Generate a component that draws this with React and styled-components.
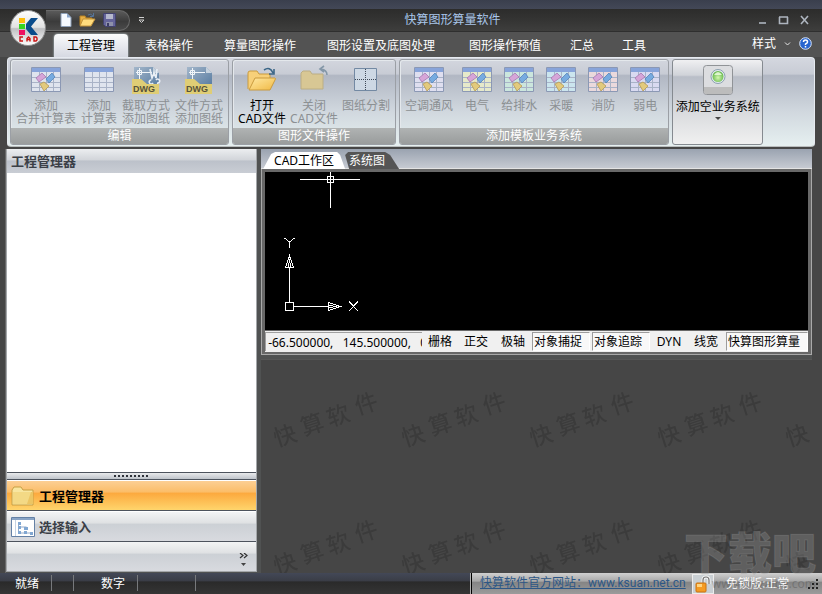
import React from 'react';
import styled, { createGlobalStyle, css } from 'styled-components';

const GlobalStyle = createGlobalStyle`
  * { box-sizing: border-box; }
  body {
    margin: 0;
    background: #464646;
    font: 12px/16px "Noto Sans", "Noto Sans CJK SC", sans-serif;
    color: #000;
  }
  button {
    margin: 0;
    padding: 0;
    border: 0;
    background: none;
    font: inherit;
    color: inherit;
    white-space: nowrap;
    cursor: default;
  }
  svg { display: block; flex: none; }
`;

const Window = styled.div`
  position: relative;
  display: flex;
  flex-direction: column;
  height: 100vh;
  overflow: hidden;
  background: #464646;
`;

/* Title bar */

const TopEdge = styled.div`
  height: 9px;
  flex: none;
  background: linear-gradient(#3a3f4d, #434857);
`;

const TitleBar = styled.header`
  display: grid;
  grid-template-columns: auto 1fr auto;
  align-items: center;
  height: 23px;
  flex: none;
  padding: 0 10px 0 46px;
  background: linear-gradient(#2c2c2b, #363635 60%, #3e3e3d);
  border-bottom: 1px solid #2f2f2f;
`;

const QuickAccess = styled.div`
  display: flex;
  align-items: center;
  gap: 8px;
`;

const QuickTools = styled.div`
  display: flex;
  align-items: center;
  gap: 6px;
  height: 21px;
  padding: 0 12px 0 13px;
  border: 1px solid #6a6a6a;
  border-left: 0;
  border-radius: 0 11px 11px 0;
  background: linear-gradient(#5a5a5a, #3b3b3b 55%, #4b4b4b);
`;

const Title = styled.h1`
  margin: 0;
  padding-left: 4px;
  font-size: 12px;
  line-height: 20px;
  font-weight: 400;
  text-align: center;
  color: #a9c6ea;
`;

const WindowButtons = styled.div`
  display: flex;
  justify-content: flex-end;
  gap: 7px;
`;

const LogoButton = styled.button`
  position: absolute;
  left: 10px;
  top: 10px;
  z-index: 2;
`;

/* Ribbon */

const TabRow = styled.div`
  display: flex;
  align-items: stretch;
  justify-content: space-between;
  height: 25px;
  flex: none;
  padding: 2px 10px 0 54px;
  background: #535353;
`;

const TabList = styled.div`
  display: flex;
  gap: 2px;
`;

const RibbonTab = styled.button`
  width: ${(p) => p.$width}px;
  padding-top: 1px;
  line-height: 20px;
  color: #fff;
  ${(p) => p.$active && css`
    color: #000;
    border-radius: 4px 4px 0 0;
    background: linear-gradient(#fafbfc, #d6d9e2);
    box-shadow: 0 0 2px #cfe4ea;
  `}
`;

const TabExtras = styled.div`
  display: flex;
  align-items: center;
  gap: 8px;
  color: #fff;
  padding-bottom: 4px;
`;

const Ribbon = styled.div`
  display: flex;
  gap: 3px;
  height: 90px;
  flex: none;
  margin: 0 7px;
  padding: 1px 2px;
  border-radius: 4px;
  border: 1px solid #e6eaf0;
  border-bottom-color: #b9bdbd;
  background: linear-gradient(#d4d7df, #c8ccd5 18%, #b1b7c3 20%, #d0d7de 60%, #e6f0f0);
`;

const Group = styled.section`
  display: flex;
  flex-direction: column;
  height: 86px;
  border: 1px solid #9b9fa5;
  border-radius: 3px;
  overflow: hidden;
  box-shadow: inset 1px 1px 0 #e4e8ec;
`;

const GroupItems = styled.div`
  display: flex;
  flex: 1;
  align-items: flex-start;
  gap: ${(p) => p.$gap}px;
  padding: 4px 5px 0;
`;

const GroupLabel = styled.div`
  height: 16px;
  line-height: 15px;
  text-align: center;
  color: #fff;
  background: linear-gradient(#b0b3b3, #999c9c);
`;

const Tool = styled.button`
  display: flex;
  flex-direction: column;
  align-items: center;
  min-width: 36px;
  line-height: 13px;
  color: ${(p) => (p.$enabled ? '#000' : '#8c9093')};
  svg { margin-bottom: 3px; }
`;

const FeatureTool = styled.button`
  display: flex;
  flex-direction: column;
  align-items: center;
  gap: 4px;
  width: 91px;
  height: 86px;
  padding-top: 4px;
  line-height: 13px;
  border: 1px solid #858a90;
  border-radius: 3px;
  background: linear-gradient(#f0f0f2, #d0d3d9 18%, #b9bec8 20%, #d8dadd 60%, #f0f0f0);
`;

/* Body */

const Body = styled.main`
  display: grid;
  grid-template-columns: minmax(0, 31fr) minmax(0, 68fr);
  gap: 4px;
  flex: 1;
  min-height: 0;
  margin: 2px 10px 0 5px;
  border-left: 1px solid #686868;
  background: #505252;
`;

const SidePanel = styled.aside`
  display: flex;
  flex-direction: column;
  min-width: 0;
  margin-bottom: 1px;
  border: 1px solid #a4a7aa;
  border-top: 0;
  background: #fff;
`;

const PanelHeader = styled.h2`
  margin: 0;
  padding: 0 4px;
  height: 24px;
  font-size: 13px;
  line-height: 25px;
  color: #3b3f47;
  background: linear-gradient(#eceef0, #d2d5da 45%, #bcc1ca 50%, #c9cdd4);
`;

const TreeArea = styled.div`
  flex: 1;
`;

const Splitter = styled.div`
  display: flex;
  justify-content: center;
  align-items: center;
  height: 8px;
  border-top: 1px solid #4d535d;
  border-bottom: 1px solid #4d535d;
  background: linear-gradient(#e9eaec, #bfc4cb);
`;

const NavButton = styled.button`
  display: flex;
  align-items: center;
  gap: 4px;
  height: 31px;
  padding: 0 4px;
  border-top: 1px solid #fff;
  border-bottom: 1px solid #4d535d;
  font-size: 13px;
  font-weight: 700;
  color: ${(p) => (p.$active ? '#000' : '#3b3f47')};
  background: ${(p) => (p.$active
    ? 'linear-gradient(#fccf94, #fbbd68 38%, #fca93e 42%, #ffd56c)'
    : 'linear-gradient(#f3f4f5, #dfe1e3 38%, #ccd0d5 42%, #d8dadf)')};
`;

const NavFooter = styled.div`
  display: flex;
  justify-content: flex-end;
  height: 29px;
  padding: 7px 8px 0;
  background: linear-gradient(#f3f4f5, #dfe1e3 38%, #ccd0d5 42%, #d8dadf);
`;

const WorkColumn = styled.div`
  display: flex;
  flex-direction: column;
  min-width: 0;
`;

const DocTabs = styled.div`
  display: flex;
  height: 20px;
  padding: 3px 0 0 2px;
  background: linear-gradient(#9aa3b0, #c6cad2);
  border-bottom: 1px solid #e3e3e3;
`;

const DocTab = styled.button`
  height: 17px;
  width: ${(p) => p.$width}px;
  padding-right: ${(p) => (p.$active ? 0 : 10)}px;
  line-height: 16px;
  text-align: center;
  color: ${(p) => (p.$active ? '#000' : '#fff')};
  background: ${(p) => (p.$active ? '#fff' : '#555')};
  clip-path: ${(p) => (p.$active
    ? 'polygon(0 100%, 8px 2px, 12px 0, calc(100% - 8px) 0, calc(100% - 5px) 3px, 100% 100%)'
    : 'polygon(0 3px, 3px 0, calc(100% - 14px) 0, calc(100% - 9px) 3px, 100% 100%, 4px 100%)')};
`;

const CadFrame = styled.section`
  flex: none;
  border: solid #a9a9a9;
  border-width: 0 1px 1px 1px;
  padding: 3px 3px 2px;
  background: #686868;
`;

const Canvas = styled.div`
  height: 158px;
  background: #000;
  overflow: hidden;
`;

const CadStatus = styled.div`
  display: flex;
  align-items: stretch;
  height: 21px;
  margin-top: 1px;
  padding: 1px 0;
  white-space: nowrap;
  overflow: hidden;
  background: #f0f0f0;
`;

const Coordinates = styled.output`
  flex: 1;
  min-width: 0;
  overflow: hidden;
  white-space: pre;
  padding-left: 2px;
  border: solid #a0a0a0;
  border-width: 1px 0 0 1px;
  line-height: 19px;
`;

const Toggle = styled.button`
  width: ${(p) => p.$width}px;
  line-height: 18px;
  border: 1px solid transparent;
  ${(p) => p.$pressed && css`
    border-color: #9c9c9c #fff #fff #9c9c9c;
    background: #f8f8f8;
    text-align: left;
    padding-left: 1px;
    &:not(:last-child) { margin-right: 2px; }
  `}
`;

const Workspace = styled.div`
  flex: 1;
  min-height: 0;
  margin-top: 4px;
  border-top: 1px solid #575757;
  background: #464646;
  overflow: hidden;
`;

/* Bottom bar */

const StatusBar = styled.footer`
  display: flex;
  justify-content: space-between;
  height: 21px;
  flex: none;
  line-height: 21px;
  color: #fff;
  background: linear-gradient(#434857, #3a3d46 38%, #2a2a2a 42%, #353535);
`;

const StatusCells = styled.div`
  display: flex;
`;

const StatusCell = styled.span`
  width: ${(p) => p.$width}px;
  margin: 2px 0 3px;
  padding-right: 12px;
  line-height: 17px;
  text-align: right;
  border-right: 1px solid #77797c;
`;

const LicenseArea = styled.div`
  display: flex;
  align-items: center;
  width: 351px;
  border-left: 1px solid #000;
  box-shadow: -1px 0 0 #b0b0b0;
  padding-left: 8px;
  background: linear-gradient(#d0d0d0, #a8a8a8 38%, #858585 45%, #9b9b9b);
`;

const SiteLink = styled.a`
  width: 212px;
  white-space: nowrap;
  font-family: Roboto, "Noto Sans CJK SC", sans-serif;
  color: #2d5786;
`;

const LockButton = styled.button`
  display: grid;
  place-items: center;
  width: 22px;
  height: 20px;
  border: 1px solid #ececec;
  background: #c9cfd3;
`;

const LicenseText = styled.span`
  flex: 1;
  padding-left: 12px;
`;

const Stamp = styled.div`
  position: absolute;
  right: 6px;
  bottom: 2px;
  z-index: 3;
  text-align: center;
  color: rgba(150, 150, 150, 0.32);
  pointer-events: none;
  strong {
    display: block;
    font-size: 44px;
    line-height: 46px;
    font-weight: 900;
    -webkit-text-stroke: 1px rgba(175, 175, 175, 0.2);
  }
  span {
    display: block;
    font-size: 12px;
    line-height: 16px;
    text-align: right;
    color: rgba(70, 70, 70, 0.35);
  }
`;

const Logo = () => (
  <svg width="37" height="37" viewBox="0 0 37 37">
    <defs>
      <linearGradient id="logoFace" x1="0" y1="0" x2="0" y2="1">
        <stop offset="0" stopColor="#fff" />
        <stop offset=".48" stopColor="#e2e2e2" />
        <stop offset=".52" stopColor="#bfc0c2" />
        <stop offset="1" stopColor="#fff" />
      </linearGradient>
    </defs>
    <circle cx="18" cy="18" r="17.5" fill="url(#logoFace)" stroke="#8b8b8b" />
    <path d="M9 8h6v5H9z" fill="#fdbd0b" />
    <path d="M9 14h6v5H9z" fill="#35d420" />
    <path d="M9 20h6v5H9z" fill="#ee1060" />
    <path d="M21 8h7l-7 8.500 7 8.500h-7l-5-6v-5z" fill="#0b4c8b" />
    <g fill="none" stroke="#cc1212" strokeWidth="1.4">
      <path d="M13 27h-3v4h3M17 31.500v-3l1.500-1.500 1.500 1.500v3M17 29.500h3M24 27v4h2l1-1v-2l-1-1z" />
    </g>
  </svg>
);

const NewIcon = () => (
  <svg width="14" height="16" viewBox="0 0 14 16">
    <path d="M2 1.500h6l4 4v9H2z" fill="#f5f9ff" stroke="#8d9fb8" />
    <path d="M8 1.500v4h4z" fill="#8aa6cc" />
  </svg>
);

const OpenSmallIcon = () => (
  <svg width="17" height="16" viewBox="0 0 17 16">
    <path d="M1 13V4h5l1 2h6v3" fill="#e8b044" stroke="#b98322" />
    <path d="M1 14l3-7h12l-4 7z" fill="#ffdc7d" stroke="#c1923a" />
    <path d="M9 3q3-2 5 1M14.500 1v3.500H11" fill="none" stroke="#56759a" />
  </svg>
);

const SaveIcon = () => (
  <svg width="15" height="16" viewBox="0 0 15 16">
    <path d="M1.500 1.500h12v13h-10l-2-2z" fill="#65659a" stroke="#42426f" />
    <path d="M4 2h7v5H4z" fill="#b5b8cd" />
    <path d="M4 10h7v4H4z" fill="#8e91aa" />
    <path d="M5 11h2v3H5z" fill="#3c3c64" />
  </svg>
);

const WindowIcon = ({ d, label }) => (
  <button aria-label={label}>
    <svg width="14" height="14" viewBox="0 0 14 14">
      <path d={d} fill="none" stroke="#aeb5bf" strokeWidth="1.600" />
    </svg>
  </button>
);

const TableIcon = ({ tint = '#dfe4ee', marks = true }) => (
  <svg width="30" height="32" viewBox="0 0 30 32">
    <path d="M.5 3.500h29v24H.5z" fill={tint} stroke="#8b98b4" />
    <path d="M1 4h28v4H1z" fill="#88a4da" />
    <path d="M1 13.500h28M1 18.500h28M1 23.500h28M8.500 8v19M15.500 8v19M22.500 8v19" stroke="#a9b3c7" fill="none" />
    {marks && (
      <g strokeWidth=".8">
        <path d="M5 14l6-5 4 4-7 5z" fill="#d6a5d8" stroke="#a579b0" />
        <path d="M15 15l6-6 3 4-6 6z" fill="#77abe0" stroke="#5584ba" />
        <path d="M9 20l4-2 5 4-5 5z" fill="#e2ca7d" stroke="#b69b55" />
      </g>
    )}
  </svg>
);

const DwgIcon = ({ cut }) => (
  <svg width="30" height="32" viewBox="0 0 30 32">
    <defs>
      <linearGradient id="dwgPage" x1="0" y1="0" x2="1" y2="1">
        <stop offset="0" stopColor="#a3b6ca" />
        <stop offset="1" stopColor="#54799f" />
      </linearGradient>
    </defs>
    <path d="M3 3h19l6 6v15H3z" fill="url(#dwgPage)" />
    <path d="M22 3v6h6z" fill="#c5d2de" />
    <path d="M5 8.500h16M8.500 4v11M6.500 6.500h4v4h-4z" fill="none" stroke="#f0f5f9" />
    {cut && <path d="M19 5l2 9 2-5 2 5 1-9M20 16a2 2 0 1 0 2 3M25 16a2 2 0 1 1 1 3" fill="none" stroke="#e9eff5" strokeWidth="1.600" />}
    <path d="M1 15h9l6 5h12v10H1z" fill="#dfcd75" />
    <text x="2" y="28" fontFamily="Liberation Sans" fontSize="9" fontWeight="700" fill="#57523a">DWG</text>
  </svg>
);

const FolderIcon = ({ open }) => (
  <svg width="32" height="32" viewBox="0 0 32 32">
    <defs>
      <linearGradient id="folderFace" x1="0" y1="0" x2="1" y2="1">
        <stop offset="0" stopColor="#ffe9a4" />
        <stop offset="1" stopColor="#f0b944" />
      </linearGradient>
    </defs>
    {open ? (
      <g>
        <path d="M2 25V9q0-2 2-2h7l2 3h11v7" fill="#f7d079" stroke="#c99a3e" />
        <path d="M3 26l6-12h20q1 0 0 2l-5 10z" fill="url(#folderFace)" stroke="#c99a3e" />
        <path d="M18 6q6-4 9 3M28 5v5h-5" fill="none" stroke="#3b6687" strokeWidth="1.600" />
      </g>
    ) : (
      <g>
        <path d="M3 25V9l2-2h7l2 3h11v15z" fill="#d8c794" stroke="#bcae84" />
        <path d="M29 11q0-5-6-6M26 2l-4 3 4 3" fill="none" stroke="#8497a8" strokeWidth="1.600" />
      </g>
    )}
  </svg>
);

const SplitIcon = () => (
  <svg width="24" height="32" viewBox="0 0 24 32">
    <path d="M.5 4.500h22v22H.5z" fill="#cdd8e4" stroke="#7389a3" />
    <path d="M1 15.500h21M11.500 5v21" fill="none" stroke="#3f4a58" strokeDasharray="1 1" />
  </svg>
);

const OrbIcon = () => (
  <svg width="32" height="32" viewBox="0 0 32 32">
    <defs>
      <radialGradient id="orb" cy=".6">
        <stop offset="0" stopColor="#d5f8b0" />
        <stop offset="1" stopColor="#6fbd55" />
      </radialGradient>
    </defs>
    <rect x="1.500" y="1.500" width="29" height="29" rx="3" fill="#dcdde0" stroke="#909397" />
    <path d="M2 23h28v5q0 2-2 2H4q-2 0-2-2z" fill="#bcbcbc" />
    <circle cx="16" cy="12.500" r="7" fill="#e4ebf0" stroke="#8ca1b0" />
    <circle cx="16" cy="12.500" r="5.500" fill="url(#orb)" />
    <path d="M12 11q4-6 8 0z" fill="#f1ffe5" opacity=".8" />
  </svg>
);

const HelpIcon = () => (
  <svg width="13" height="13" viewBox="0 0 13 13">
    <circle cx="6.500" cy="6.500" r="5.800" fill="#2764cf" stroke="#d6e4fa" />
    <path d="M4.500 5q0-2 2-2t2 2q0 1-1.200 1.500T6.500 8M6.500 9v1.500" fill="none" stroke="#fff" strokeWidth="1.500" />
  </svg>
);

const NavFolderIcon = () => (
  <svg width="24" height="22" viewBox="0 0 24 22">
    <path d="M1 5l2-3h7l2 3h10v15H1z" fill="#f8e6a0" stroke="#c7a045" />
    <path d="M2 7h20v12H2z" fill="#f3d985" />
    <path d="M20 7h2v12h-6z" fill="#e7b84c" opacity=".6" />
  </svg>
);

const NavTreeIcon = () => (
  <svg width="24" height="22" viewBox="0 0 24 22">
    <path d="M.5 1.500h23v19H.5z" fill="#fff" stroke="#6481a6" />
    <path d="M1 2h22v2H1z" fill="#8aa5c6" />
    <path d="M4.500 4v16" stroke="#c6d3e3" />
    <path d="M7.500 7v10h13M7.500 11h8" fill="none" stroke="#95abc9" />
    <path d="M7 6h3v3H7zM7 10h3v3H7zM7 15h3v3H7zM13 11h4v3h-4zM13 15h3v3h-3zM19 16h3v3h-3z" fill="#81a7d2" />
  </svg>
);

const LockIcon = () => (
  <svg width="18" height="18" viewBox="0 0 18 18">
    <path d="M9 9V5q0-3 3-3t3 3v4" fill="none" stroke="#f5f5f5" strokeWidth="3" />
    <path d="M9 9V5q0-3 3-3t3 3v4" fill="none" stroke="#777" strokeWidth="1.200" />
    <rect x="2" y="8" width="10" height="9" rx="1" fill="#f49b23" stroke="#c87312" />
    <path d="M3 9h5v3H3z" fill="#ffd480" />
  </svg>
);

const CadDrawing = () => (
  <svg width="160" height="158" viewBox="0 0 160 158" fill="none" stroke="#fff" shapeRendering="crispEdges" role="img" aria-label="CAD">
    <path d="M35 7.500h60M65.500 0v36M62.500 4.500h6v6h-6z" />
    <path d="M20.500 130.500h8v8h-8zM24.500 130V95M29 134.500h34" />
    <path d="M20.500 95.500L24.500 84l4 11.500zM23.500 95l1-8 1 8M63.500 130.500L75 134.500l-11.500 4zM64 133.500l8 1-8 1" />
    <path d="M19.500 66l5 4 5-4M24.500 70v6M84 129.500l9 9.500M93 129.500l-9 9.500" />
  </svg>
);

const WorkspacePattern = () => (
  <svg width="100%" height="100%" aria-hidden="true">
    <defs>
      <pattern id="brand" x="0" y="10" width="128" height="128" patternUnits="userSpaceOnUse">
        <g fill="#3b3b3b" fontFamily="Noto Sans CJK SC" fontSize="23" fontWeight="500" textAnchor="middle">
          {[['快', 24, 65], ['算', 51, 54], ['软', 77, 45], ['件', 105, 33]].map(([c, x, y]) => (
            <text key={c} transform={`translate(${x} ${y}) rotate(-18)`} y="9">{c}</text>
          ))}
        </g>
      </pattern>
    </defs>
    <rect width="100%" height="100%" fill="url(#brand)" />
  </svg>
);

const ribbonTabs = [
  ['工程管理', 74], ['表格操作', 78], ['算量图形操作', 100], ['图形设置及底图处理', 138],
  ['图形操作预值', 106], ['汇总', 44], ['工具', 56],
];

const templates = [
  ['空调通风', '#dfdff0'], ['电气', '#e6e9ca'], ['给排水', '#cbe6dd'],
  ['采暖', '#cbe5ee'], ['消防', '#ead9dc'], ['弱电', '#d9daf1'],
];

const toggles = [
  ['栅格', 36], ['正交', 36], ['极轴', 38], ['对象捕捉', 58, true],
  ['对象追踪', 58, true], ['DYN', 34], ['线宽', 40], ['快算图形算量', 82, true],
];

const ToolItem = ({ icon, lines, enabled }) => (
  <Tool $enabled={enabled} disabled={!enabled}>
    {icon}
    {lines.map((line) => <span key={line}>{line}</span>)}
  </Tool>
);

export default function App() {
  return (
    <Window>
      <GlobalStyle />
      <TopEdge />
      <TitleBar>
        <QuickAccess>
          <QuickTools>
            <button aria-label="新建"><NewIcon /></button>
            <button aria-label="打开"><OpenSmallIcon /></button>
            <button aria-label="保存"><SaveIcon /></button>
          </QuickTools>
          <button aria-label="自定义快速访问工具栏">
            <svg width="7" height="8" viewBox="0 0 7 8">
              <path d="M1 1.500h5M1 4l2.500 2.500L6 4z" fill="none" stroke="#d0d0d0" />
            </svg>
          </button>
        </QuickAccess>
        <Title>快算图形算量软件</Title>
        <WindowButtons>
          <WindowIcon label="最小化" d="M3 10h7" />
          <WindowIcon label="最大化" d="M2.500 4v6.500h8V4M2 4h9" />
          <WindowIcon label="关闭" d="M3 3l7 8M10 3l-7 8" />
        </WindowButtons>
      </TitleBar>
      <LogoButton aria-label="K CAD"><Logo /></LogoButton>

      <TabRow>
        <TabList role="tablist">
          {ribbonTabs.map(([label, width], i) => (
            <RibbonTab key={label} role="tab" aria-selected={i === 0} $active={i === 0} $width={width}>{label}</RibbonTab>
          ))}
        </TabList>
        <TabExtras>
          <button>样式</button>
          <svg width="7" height="6" viewBox="0 0 7 6"><path d="M1 1.500l2.500 2.500L6 1.500" fill="none" stroke="#e8e8e8" /></svg>
          <button aria-label="帮助"><HelpIcon /></button>
        </TabExtras>
      </TabRow>

      <Ribbon>
        <Group>
          <GroupItems $gap={5}>
            <ToolItem icon={<TableIcon />} lines={['添加', '合并计算表']} />
            <ToolItem icon={<TableIcon marks={false} />} lines={['添加', '计算表']} />
            <ToolItem icon={<DwgIcon cut />} lines={['截取方式', '添加图纸']} />
            <ToolItem icon={<DwgIcon />} lines={['文件方式', '添加图纸']} />
          </GroupItems>
          <GroupLabel>编辑</GroupLabel>
        </Group>
        <Group>
          <GroupItems $gap={4}>
            <ToolItem enabled icon={<FolderIcon open />} lines={['打开', 'CAD文件']} />
            <ToolItem icon={<FolderIcon />} lines={['关闭', 'CAD文件']} />
            <ToolItem icon={<SplitIcon />} lines={['图纸分割']} />
          </GroupItems>
          <GroupLabel>图形文件操作</GroupLabel>
        </Group>
        <Group>
          <GroupItems $gap={6}>
            {templates.map(([label, tint]) => (
              <ToolItem key={label} icon={<TableIcon tint={tint} />} lines={[label]} />
            ))}
          </GroupItems>
          <GroupLabel>添加模板业务系统</GroupLabel>
        </Group>
        <FeatureTool>
          <OrbIcon />
          <span>添加空业务系统</span>
          <svg width="6" height="4" viewBox="0 0 6 4"><path d="M0 0h6L3 3z" fill="#444" /></svg>
        </FeatureTool>
      </Ribbon>

      <Body>
        <SidePanel>
          <PanelHeader>工程管理器</PanelHeader>
          <TreeArea />
          <Splitter>
            <svg width="35" height="2" viewBox="0 0 35 2">
              <path d="M0 1h35" stroke="#2d3138" strokeWidth="2" strokeDasharray="2 2" />
            </svg>
          </Splitter>
          <NavButton $active><NavFolderIcon />工程管理器</NavButton>
          <NavButton><NavTreeIcon />选择输入</NavButton>
          <NavFooter>
            <button aria-label="配置按钮">
              <svg width="9" height="14" viewBox="0 0 9 14">
                <path d="M1 0l3 2.500L1 5M5 0l3 2.500L5 5" fill="none" stroke="#333" strokeWidth="1.200" />
                <path d="M2 10h5l-2.500 3z" fill="#444" />
              </svg>
            </button>
          </NavFooter>
        </SidePanel>

        <WorkColumn>
          <DocTabs role="tablist">
            <DocTab role="tab" aria-selected="true" $active $width={82}>CAD工作区</DocTab>
            <DocTab role="tab" aria-selected="false" $width={54}>系统图</DocTab>
          </DocTabs>
          <CadFrame>
            <Canvas><CadDrawing /></Canvas>
            <CadStatus>
              <Coordinates>-66.500000,   145.500000,   0</Coordinates>
              {toggles.map(([label, width, pressed]) => (
                <Toggle key={label} $width={width} $pressed={pressed} aria-pressed={!!pressed}>{label}</Toggle>
              ))}
            </CadStatus>
          </CadFrame>
          <Workspace><WorkspacePattern /></Workspace>
        </WorkColumn>
      </Body>

      <StatusBar>
        <StatusCells>
          <StatusCell $width={52}>就绪</StatusCell>
          <StatusCell $width={22} />
          <StatusCell $width={64}>数字</StatusCell>
          <StatusCell $width={58} />
        </StatusCells>
        <LicenseArea>
          <SiteLink href="http://www.ksuan.net.cn">快算软件官方网站：www.ksuan.net.cn</SiteLink>
          <LockButton aria-label="授权"><LockIcon /></LockButton>
          <LicenseText>免锁版:正常</LicenseText>
          <svg width="14" height="14" viewBox="0 0 14 14">
            <path d="M8 2h2v2H8zM4 6h2v2H4zM8 6h2v2H8zM0 10h2v2H0zM4 10h2v2H4zM8 10h2v2H8z" fill="#222" />
          </svg>
        </LicenseArea>
      </StatusBar>
      <Stamp>
        <strong>下载吧</strong>
        <span>www.xiazaiba.com</span>
      </Stamp>
    </Window>
  );
}
